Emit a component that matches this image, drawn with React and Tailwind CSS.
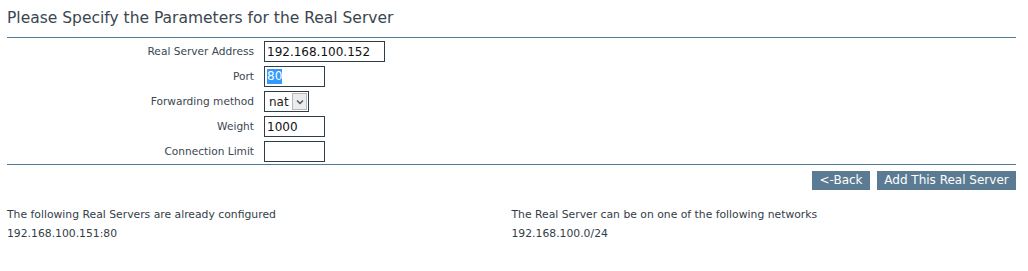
import React from 'react';

const rows = [
  { label: 'Real Server Address', kind: 'text', value: '192.168.100.152', w: 'w-[121px]' },
  { label: 'Port', kind: 'selected', value: '80', w: 'w-[61px]' },
  { label: 'Forwarding method', kind: 'select', value: 'nat' },
  { label: 'Weight', kind: 'text', value: '1000', w: 'w-[61px]' },
  { label: 'Connection Limit', kind: 'text', value: '', w: 'w-[61px]' },
];

const Field = ({ row }) => {
  if (row.kind === 'select') {
    return (
      <div className="flex h-[21px] w-[45px] items-center border border-[#2e3d48] bg-white">
        <span className="flex-1 pl-[4px] text-[12px] leading-none text-[#222]">{row.value}</span>
        <span className="mr-[1px] flex h-[17px] w-[15px] items-center justify-center border border-[#b8b8b8] bg-[#ececec]">
          <svg width="8" height="6" viewBox="0 0 8 6">
            <path d="M1 1.5 L4 4.5 L7 1.5" fill="none" stroke="#4a5560" strokeWidth="1.4" />
          </svg>
        </span>
      </div>
    );
  }
  return (
    <div className={`flex h-[21px] items-center border border-[#2e3d48] bg-white pl-[2px] ${row.w}`}>
      {row.kind === 'selected' ? (
        <span className="bg-[#3399ff] text-[12px] leading-[15px] text-white">{row.value}</span>
      ) : (
        <span className="text-[12px] leading-none text-[#111]">{row.value}</span>
      )}
    </div>
  );
};

export default function App() {
  return (
    <div className="h-[271px] w-[1028px] bg-white font-['DejaVu_Sans',sans-serif] text-[#333d47]">
      <div className="w-[1016px] pl-[7px]">
        {/* heading */}
        <h1 className="border-b border-[#4f7a94] pt-[8px] pb-[9px] text-[15.5px] leading-[20px] text-[#3b4650]">
          Please Specify the Parameters for the Real Server
        </h1>

        {/* form table */}
        <div className="border-b border-[#4f7a94] pt-[1px]">
          {rows.map((row) => (
            <div key={row.label} className="flex h-[25px] items-center">
              <div className="w-[257px] pr-[10px] text-right text-[10.6px] text-[#3b4650]">{row.label}</div>
              <Field row={row} />
            </div>
          ))}
        </div>

        {/* actions */}
        <div className="mt-[6px] flex justify-end gap-[7px]">
          <button className="h-[19px] w-[58px] bg-[#5b7b92] text-[12px] leading-[19px] text-white">&lt;-Back</button>
          <button className="h-[19px] w-[139px] bg-[#5b7b92] text-[12px] leading-[19px] text-white">Add This Real Server</button>
        </div>

        {/* info */}
        <div className="mt-[15px] grid grid-cols-2 text-[10.8px] leading-[19px] text-[#333d47]">
          <div>
            <p>The following Real Servers are already configured</p>
            <p>192.168.100.151:80</p>
          </div>
          <div>
            <p>The Real Server can be on one of the following networks</p>
            <p>192.168.100.0/24</p>
          </div>
        </div>
      </div>
    </div>
  );
}
